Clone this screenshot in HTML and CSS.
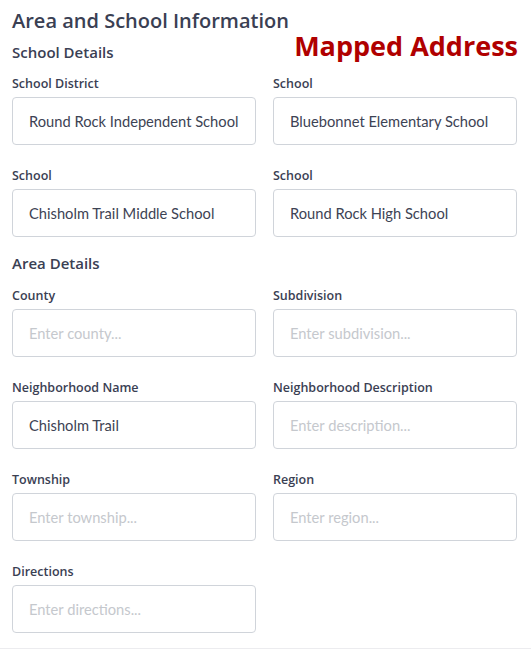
FILE: index.html
```html
<!DOCTYPE html>
<html>
<head>
<meta charset="utf-8">
<link rel="stylesheet" href="styles.css">
</head>
<body>
<div class="page">
  <h1 class="title">Area and School Information</h1>
  <div class="mapped">Mapped Address</div>
  <h2 class="section">School Details</h2>
  <div class="grid">
    <div class="field"><label>School District</label><input type="text" value="Round Rock Independent School"></div>
    <div class="field"><label>School</label><input type="text" value="Bluebonnet Elementary School"></div>
    <div class="field"><label>School</label><input type="text" value="Chisholm Trail Middle School"></div>
    <div class="field"><label>School</label><input type="text" value="Round Rock High School"></div>
  </div>
  <h2 class="section area">Area Details</h2>
  <div class="grid area-grid">
    <div class="field"><label>County</label><input type="text" placeholder="Enter county..."></div>
    <div class="field"><label>Subdivision</label><input type="text" placeholder="Enter subdivision..."></div>
    <div class="field"><label>Neighborhood Name</label><input type="text" value="Chisholm Trail"></div>
    <div class="field"><label>Neighborhood Description</label><input type="text" placeholder="Enter description..."></div>
    <div class="field"><label>Township</label><input type="text" placeholder="Enter township..."></div>
    <div class="field"><label>Region</label><input type="text" placeholder="Enter region..."></div>
    <div class="field"><label>Directions</label><input type="text" placeholder="Enter directions..."></div>
  </div>
</div>
</body>
</html>
```
FILE: styles.css
```css
* { box-sizing: border-box; }
html, body { margin: 0; padding: 0; background: #fff; }
body { font-family: "Open Sans", Lato, sans-serif; color: #3a4053; }
.page {
  position: relative;
  padding: 8px 14px 15px 12px;
  border-bottom: 1px solid #ececef;
}
.title {
  margin: 0;
  font-size: 20px;
  line-height: 26px;
  font-weight: 600;
  color: #3a4053;
}
.mapped {
  position: absolute;
  top: 28px;
  right: 13px;
  font-family: "Open Sans", sans-serif;
  font-weight: 700;
  font-size: 27px;
  line-height: 36px;
  color: #b00000;
}
.section {
  margin: 7px 0 0;
  font-size: 15px;
  line-height: 22px;
  font-weight: 600;
  color: #3a4053;
}
.section.area { margin-top: 15px; }
.grid {
  display: grid;
  grid-template-columns: 1fr 1fr;
  column-gap: 17px;
  row-gap: 22px;
  margin-top: 12px;
}
.grid.area-grid { margin-top: 13px; }
.field { display: flex; flex-direction: column; }
.field label {
  font-size: 12.5px;
  line-height: 18px;
  font-weight: 600;
  color: #3a4053;
  margin-bottom: 4px;
}
.field input {
  height: 48px;
  border: 1px solid #d0d4da;
  border-radius: 4px;
  padding: 0 16px;
  font-family: Lato, "Open Sans", sans-serif;
  font-size: 14.7px;
  color: #3d4354;
  background: #fff;
  outline: none;
}
.field input::placeholder { color: #c5c8cd; }
```
